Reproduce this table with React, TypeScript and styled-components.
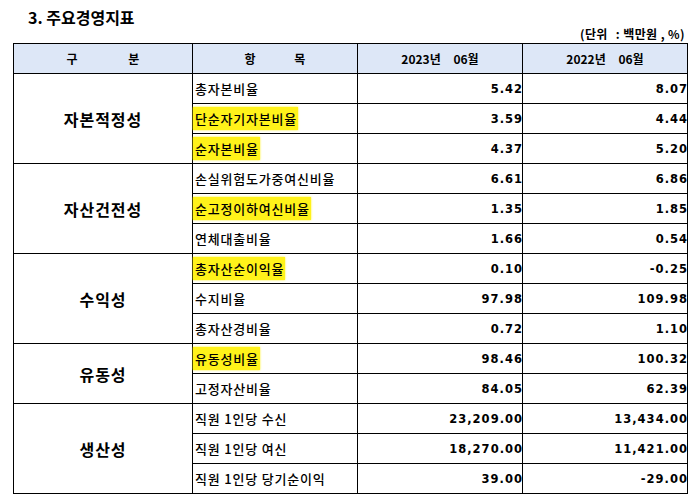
import React from 'react';
import styled, { createGlobalStyle } from 'styled-components';

const GlobalStyle = createGlobalStyle`
  body {
    margin: 0;
    background: #fff;
    font-family: "Noto Sans CJK KR", "Noto Sans", sans-serif;
    color: #000;
  }
`;

interface Item {
    name: string;
    marked?: boolean;
    cur: string;
    prev: string;
}

interface Group {
    title: string;
    items: Item[];
}

const groups: Group[] = [
    {
        title: '자본적정성',
        items: [
            { name: '총자본비율', cur: '5.42', prev: '8.07' },
            { name: '단순자기자본비율', marked: true, cur: '3.59', prev: '4.44' },
            { name: '순자본비율', marked: true, cur: '4.37', prev: '5.20' },
        ],
    },
    {
        title: '자산건전성',
        items: [
            { name: '손실위험도가중여신비율', cur: '6.61', prev: '6.86' },
            { name: '순고정이하여신비율', marked: true, cur: '1.35', prev: '1.85' },
            { name: '연체대출비율', cur: '1.66', prev: '0.54' },
        ],
    },
    {
        title: '수익성',
        items: [
            { name: '총자산순이익율', marked: true, cur: '0.10', prev: '-0.25' },
            { name: '수지비율', cur: '97.98', prev: '109.98' },
            { name: '총자산경비율', cur: '0.72', prev: '1.10' },
        ],
    },
    {
        title: '유동성',
        items: [
            { name: '유동성비율', marked: true, cur: '98.46', prev: '100.32' },
            { name: '고정자산비율', cur: '84.05', prev: '62.39' },
        ],
    },
    {
        title: '생산성',
        items: [
            { name: '직원 1인당 수신', cur: '23,209.00', prev: '13,434.00' },
            { name: '직원 1인당 여신', cur: '18,270.00', prev: '11,421.00' },
            { name: '직원 1인당 당기순이익', cur: '39.00', prev: '-29.00' },
        ],
    },
];

const Page = styled.div`
  width: 698px;
  height: 502px;
  overflow: hidden;
`;

const Title = styled.h3`
  margin: 0;
  padding: 7px 0 0 28px;
  font-size: 16px;
  font-weight: 700;
  line-height: 20px;
`;

const Unit = styled.div`
  display: flex;
  justify-content: flex-end;
  gap: 8px;
  padding-right: 13px;
  margin-top: -1px;
  font-size: 12px;
  font-weight: 700;
  line-height: 15px;
  letter-spacing: 0.4px;
`;

const Table = styled.table`
  margin: 2px 0 0 13px;
  border-collapse: collapse;
  table-layout: fixed;
  width: 674px;
`;

const HeadCell = styled.th<{ $w: number; $gap?: number }>`
  width: ${p => p.$w}px;
  height: 29px;
  padding: 0;
  border: 1px solid #000;
  background: #dde7f7;
  font-size: 12px;
  font-weight: 700;
  text-align: center;
  word-spacing: ${p => p.$gap ?? 10}px;
`;

const GroupCell = styled.td`
  padding: 0;
  border: 1px solid #000;
  text-align: center;
  font-size: 16px;
  font-weight: 700;
  letter-spacing: 1px;
`;

const NameCell = styled.td`
  height: 29px;
  padding: 0 0 0 2px;
  border: 1px solid #000;
  font-size: 13px;
  font-weight: 500;
  letter-spacing: 0.8px;
  white-space: nowrap;
`;

const Mark = styled.span<{ $on?: boolean }>`
  background: ${p => (p.$on ? '#fff21a' : 'transparent')};
  padding: 2px 1px 2px 2px;
  margin-left: -2px;
  box-shadow: ${p => (p.$on ? '0 0 2px 0 #fff21a' : 'none')};
`;

const NumCell = styled.td`
  padding: 0;
  border: 1px solid #000;
  text-align: right;
  font-family: "DejaVu Sans", "Noto Sans", sans-serif;
  font-size: 11.5px;
  font-weight: 700;
  letter-spacing: 1px;
`;

const NumText = styled.span`
  margin-right: -1px;
`;

export default function App() {
    return (
        <Page>
            <GlobalStyle />
            <Title>3. 주요경영지표</Title>
            <Unit>
                <span>(단위</span>
                <span>: 백만원 , %)</span>
            </Unit>
            <Table>
                <thead>
                    <tr>
                        <HeadCell $w={178} $gap={48}>구 분</HeadCell>
                        <HeadCell $w={164} $gap={36}>항 목</HeadCell>
                        <HeadCell $w={164}>2023년 06월</HeadCell>
                        <HeadCell $w={164}>2022년 06월</HeadCell>
                    </tr>
                </thead>
                <tbody>
                    {groups.map(g =>
                        g.items.map((it, i) => (
                            <tr key={g.title + it.name}>
                                {i === 0 && (
                                    <GroupCell rowSpan={g.items.length}>{g.title}</GroupCell>
                                )}
                                <NameCell>
                                    <Mark $on={it.marked}>{it.name}</Mark>
                                </NameCell>
                                <NumCell><NumText>{it.cur}</NumText></NumCell>
                                <NumCell><NumText>{it.prev}</NumText></NumCell>
                            </tr>
                        ))
                    )}
                </tbody>
            </Table>
        </Page>
    );
}
